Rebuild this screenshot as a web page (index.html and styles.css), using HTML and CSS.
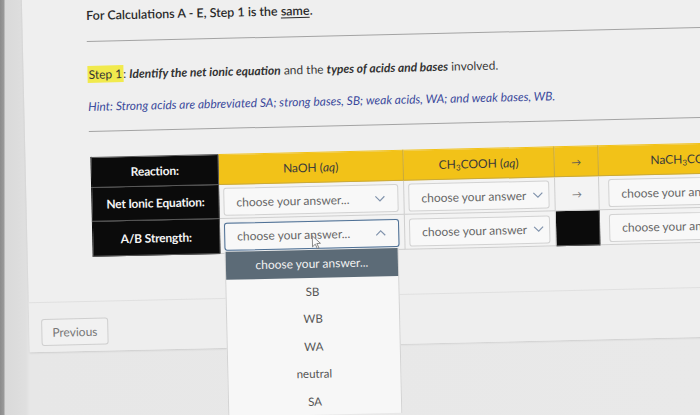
FILE: index.html
```html
<!DOCTYPE html>
<html>
<head>
<meta charset="utf-8">
<link rel="stylesheet" href="styles.css">
</head>
<body>
<div class="page">
  <div class="card">
    <div class="content">
      <p class="title">For Calculations A - E, Step 1 is the <u>same</u>.</p>
      <hr class="rule">
      <p class="step"><span class="hl">Step 1</span>: <em class="strong">Identify the net ionic equation</em> and the <em class="strong">types of acids and bases</em> involved.</p>
      <p class="hint">Hint: Strong acids are abbreviated SA; strong bases, SB; weak acids, WA; and weak bases, WB.</p>
      <hr class="rule rule2">
      <table class="rx">
        <colgroup>
          <col class="c0"><col class="c1"><col class="c2"><col class="c3"><col class="c4">
        </colgroup>
        <tr class="head">
          <th class="lab">Reaction:</th>
          <td>NaOH (<i>aq</i>)</td>
          <td>CH<sub>3</sub>COOH (<i>aq</i>)</td>
          <td class="arr">→</td>
          <td>NaCH<sub>3</sub>COO (<i>aq</i>)</td>
        </tr>
        <tr class="row r2">
          <th class="lab">Net Ionic Equation:</th>
          <td><div class="sel"><span class="txt">choose your answer...</span><svg class="chev" width="11" height="7" viewBox="0 0 11 7"><polyline points="1,1 5.5,5.5 10,1" fill="none" stroke="#8294ad" stroke-width="1.2"/></svg></div></td>
          <td><div class="sel"><span class="txt">choose your answer</span><svg class="chev" width="11" height="7" viewBox="0 0 11 7"><polyline points="1,1 5.5,5.5 10,1" fill="none" stroke="#8294ad" stroke-width="1.2"/></svg></div></td>
          <td class="arr small">→</td>
          <td><div class="sel wide"><span class="txt">choose your answer...</span></div></td>
        </tr>
        <tr class="row r3">
          <th class="lab">A/B Strength:</th>
          <td>
            <div class="selwrap">
              <div class="sel focus"><span class="txt">choose your answer...</span><svg class="chev" width="11" height="7" viewBox="0 0 11 7"><polyline points="1,6 5.5,1.5 10,6" fill="none" stroke="#8294ad" stroke-width="1.2"/></svg></div>
              <ul class="menu">
                <li class="mhead">choose your answer...</li>
                <li>SB</li>
                <li>WB</li>
                <li>WA</li>
                <li>neutral</li>
                <li>SA</li>
              </ul>
              <svg class="cursor" width="10" height="15" viewBox="0 0 10 15"><path d="M1 1 L1 12 L3.8 9.4 L5.8 13.8 L7.4 13 L5.4 8.8 L9 8.6 Z" fill="#fafafa" stroke="#6b6b6b" stroke-width="0.8"/></svg>
            </div>
          </td>
          <td><div class="sel"><span class="txt">choose your answer</span><svg class="chev" width="11" height="7" viewBox="0 0 11 7"><polyline points="1,1 5.5,5.5 10,1" fill="none" stroke="#8294ad" stroke-width="1.2"/></svg></div></td>
          <td class="blk"></td>
          <td><div class="sel wide"><span class="txt">choose your answer...</span></div></td>
        </tr>
      </table>
    </div>
    <div class="footer"><button class="prev">Previous</button></div>
  </div>
</div>
</body>
</html>
```
FILE: styles.css
```css
html, body {
  margin: 0;
  padding: 0;
}
body {
  width: 700px;
  height: 415px;
  overflow: hidden;
  font-family: Lato, "Noto Sans", sans-serif;
  background: linear-gradient(to right, #8b8b8b 0, #9a9a9a 4px, #d9d9d9 5px, #dfdfdf 26px, #e7e7e7 30px, #e9e9e9 100%);
}
.page {
  width: 820px;
  transform: rotate(-1.3deg);
  transform-origin: 350px 200px;
}
.card {
  margin-left: 26px;
  margin-top: -20px;
  width: 790px;
  height: 365px;
  background: #efefef;
  box-shadow: 0 1px 2px rgba(0,0,0,0.12);
  box-sizing: border-box;
  padding-top: 22px;
  display: flex;
  flex-direction: column;
}
.content {
  padding-left: 64px;
  flex: 1;
}
.title {
  margin: 0;
  font-size: 12.5px;
  line-height: 16px;
  color: #2a2a2a;
  font-weight: 600;
}
.title u {
  text-underline-offset: 2px;
}
.rule {
  border: 0;
  border-top: 1px solid #a3a3a3;
  height: 0;
  margin: 17px 0 0 0;
}
.step {
  margin: 25px 0 0 0;
  font-size: 12px;
  line-height: 16px;
  color: #3a3a3a;
}
.hl {
  background: #f1ea4d;
  padding: 1px 1px;
  color: #333;
}
.step em.strong {
  font-style: italic;
  font-weight: 700;
  color: #333;
}
.hint {
  margin: 16px 0 0 0;
  font-size: 12px;
  line-height: 16px;
  font-style: italic;
  color: #3b4a9c;
}
.rule2 {
  margin-top: 16px;
}
.rx {
  margin: 25px 0 0 1px;
  border-collapse: collapse;
  table-layout: fixed;
  width: 697px;
}
.c0 { width: 127px; }
.c1 { width: 185px; }
.c2 { width: 151px; }
.c3 { width: 44px; }
.c4 { width: 190px; }
.rx th, .rx td {
  padding: 0;
  border: 1px solid #cfcfcf;
  text-align: center;
  vertical-align: middle;
}
.rx th.lab {
  background: #0b0b0b;
  color: #f4f4f4;
  font-weight: 700;
  font-size: 12px;
  letter-spacing: -0.2px;
  border-color: #5a5a5a;
  border-left-color: #0b0b0b;
}
.head th, .head td {
  height: 29px;
}
.head td {
  background: #f2c218;
  color: #3a3a3a;
  font-size: 12px;
  border-color: #c9a93a;
  border-top-color: #f2c218;
}
.head sub {
  font-size: 8px;
  vertical-align: -2px;
  line-height: 0;
}
.head td.arr {
  font-size: 10px;
  color: #555;
}
.row th, .row td {
  background: #f3f3f3;
}
.r2 th, .r2 td { height: 30px; }
.r3 th, .r3 td { height: 31px; }
.row td {
  padding: 2px 5px 1px 4px;
}
.row td.arr.small {
  font-size: 10px;
  color: #777;
  padding: 0;
}
.row td.blk {
  background: #0b0b0b;
  border-color: #5a5a5a;
}
.sel {
  box-sizing: border-box;
  height: 28px;
  background: #f8f8f8;
  border: 1px solid #d2d2d2;
  border-radius: 3px;
  display: flex;
  align-items: center;
  justify-content: space-between;
  padding: 0 12px 0 12px;
  font-size: 12px;
  color: #666;
  white-space: nowrap;
  overflow: hidden;
}
.sel.wide {
  justify-content: flex-start;
  margin-left: 5px;
}
.sel.focus {
  border: 1.5px solid #4f7196;
  box-shadow: 0 0 1px rgba(79,113,150,0.4);
}
.chev {
  flex: none;
  margin-left: 6px;
}
.selwrap {
  position: relative;
}
.menu {
  position: absolute;
  left: 0;
  top: 29px;
  width: 172px;
  margin: 0;
  padding: 0;
  list-style: none;
  background: #f7f7f7;
  border-left: 1px solid #d3d3d3;
  border-right: 1px solid #d3d3d3;
  z-index: 2;
}
.menu li {
  height: 27.5px;
  line-height: 27.5px;
  text-align: center;
  font-size: 11.5px;
  color: #555;
}
.menu li.mhead {
  height: 28px;
  line-height: 28px;
  background: #5c6b77;
  color: #f2f2f2;
  font-size: 12px;
}
.cursor {
  position: absolute;
  left: 87px;
  top: 14px;
  z-index: 3;
}
.footer {
  border-top: 1px solid #e0e0e0;
  padding: 16px 0 6px 12px;
  height: 50px;
  box-sizing: border-box;
  background: #eeeeee;
}
.prev {
  height: 27px;
  width: 67px;
  border: 1px solid #cfcfcf;
  border-radius: 3px;
  background: #f1f1f1;
  font-family: Lato, "Noto Sans", sans-serif;
  font-size: 12px;
  color: #777;
  padding: 0;
}
```
